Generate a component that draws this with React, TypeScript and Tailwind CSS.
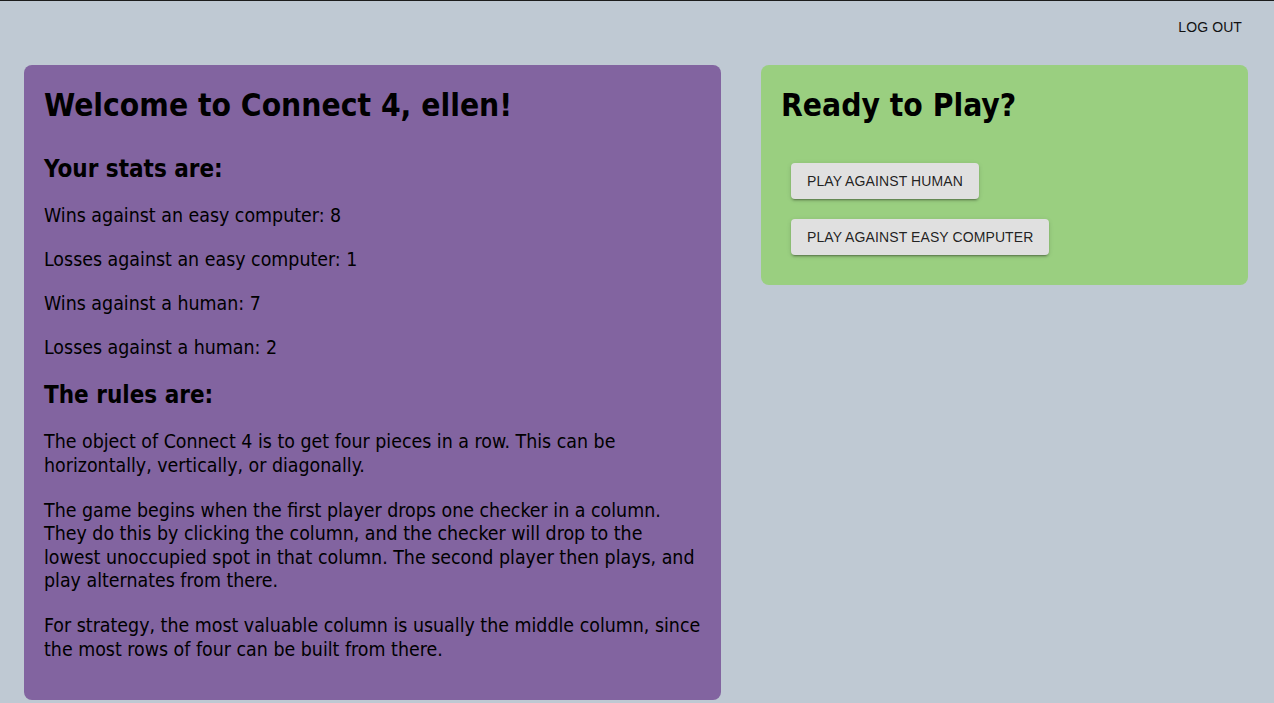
import React from "react";

const btnShadow =
  "shadow-[0px_3px_1px_-2px_rgba(0,0,0,0.2),0px_2px_2px_0px_rgba(0,0,0,0.14),0px_1px_5px_0px_rgba(0,0,0,0.12)]";

export default function App() {
  return (
    <div className="min-h-screen bg-[#bfc9d3] text-black">
      <div className="h-px bg-[#1c1c1c]" />
      <div className="flex justify-end pr-[24px] pt-[8px]">
        <button className="h-9 px-2 rounded text-[14px] font-medium uppercase tracking-[0.1px] text-[#111] font-['Liberation_Sans',Arial,sans-serif]">
          Log out
        </button>
      </div>
      <main className="mt-[20px] flex items-start gap-[40px] px-[24px] font-['DejaVu_Sans_Condensed','DejaVu_Sans',sans-serif] [font-stretch:condensed]">
        <section className="w-[697px] shrink-0 rounded-lg bg-[#8264a0] px-[20px] pt-[21px] pb-[39px]">
          <h1 className="text-[31.5px] leading-[38px] font-bold">Welcome to Connect 4, ellen!</h1>
          <h2 className="mt-[31px] text-[24px] leading-[29px] font-bold">Your stats are:</h2>
          <div className="mt-[20px] flex flex-col gap-[20.5px] text-[19.4px] leading-[23.5px]">
            <p>Wins against an easy computer: 8</p>
            <p>Losses against an easy computer: 1</p>
            <p>Wins against a human: 7</p>
            <p>Losses against a human: 2</p>
          </div>
          <h2 className="mt-[21px] text-[24px] leading-[29px] font-bold">The rules are:</h2>
          <div className="mt-[20.5px] flex flex-col gap-[21.5px] text-[19.4px] leading-[23.5px]">
            <p>
              The object of Connect 4 is to get four pieces in a row. This can be horizontally, vertically, or
              diagonally.
            </p>
            <p>
              The game begins when the first player drops one checker in a column. They do this by clicking the
              column, and the checker will drop to the lowest unoccupied spot in that column. The second player then
              plays, and play alternates from there.
            </p>
            <p>
              For strategy, the most valuable column is usually the middle column, since the most rows of four can be
              built from there.
            </p>
          </div>
        </section>
        <section className="w-[487px] shrink-0 rounded-lg bg-[#9acf80] px-[20px] pt-[21px] pb-[20px]">
          <h1 className="text-[31.5px] leading-[38px] font-bold">Ready to Play?</h1>
          <div className="mt-[29px] flex flex-col items-start gap-[20px] p-[10px] font-['Liberation_Sans',Arial,sans-serif]">
            <button
              className={`h-9 rounded px-4 bg-[#e0e0e0] text-[14px] uppercase tracking-[0.1px] text-[rgba(0,0,0,0.87)] ${btnShadow}`}
            >
              Play against human
            </button>
            <button
              className={`h-9 rounded px-4 bg-[#e0e0e0] text-[14px] uppercase tracking-[0.1px] text-[rgba(0,0,0,0.87)] ${btnShadow}`}
            >
              Play against easy computer
            </button>
          </div>
        </section>
      </main>
    </div>
  );
}
